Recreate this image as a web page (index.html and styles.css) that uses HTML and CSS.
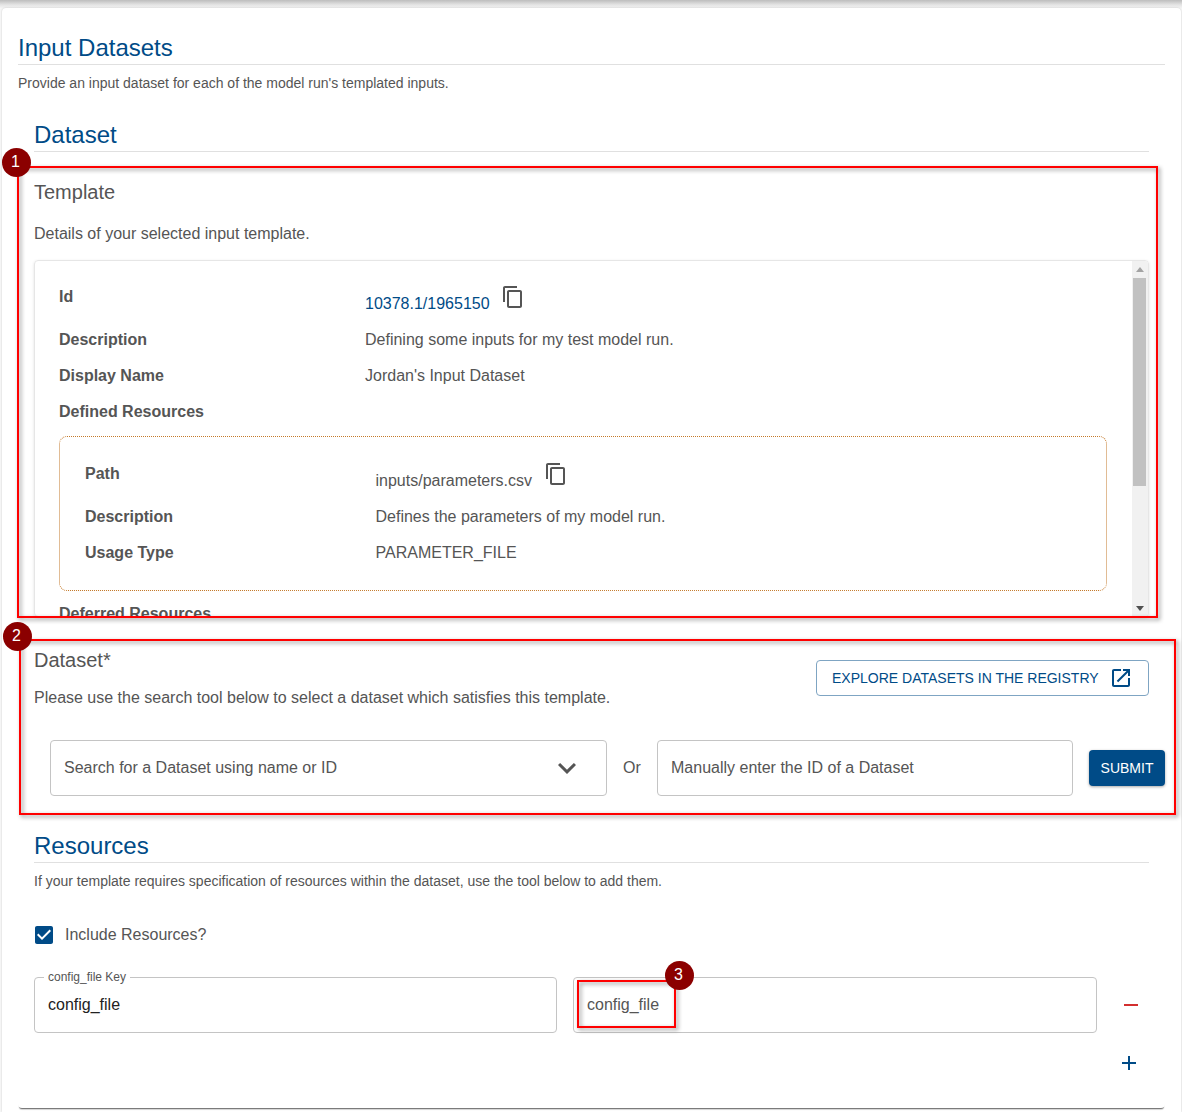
FILE: index.html
```html
<!DOCTYPE html>
<html lang="en">
<head>
<meta charset="utf-8">
<title>Input Datasets</title>
<link rel="stylesheet" href="styles.css">
</head>
<body>
<div class="page">
  <div class="topbar"></div>
  <main class="sheet">
    <div class="card">
      <header class="intro">
        <h1 class="title">Input Datasets</h1>
        <p class="small intro-text">Provide an input dataset for each of the model run's templated inputs.</p>
      </header>
      <section class="inner">
        <h2 class="title dataset-title">Dataset</h2>
        <h3 class="subtitle template-title">Template</h3>
        <p class="body-text details-text">Details of your selected input template.</p>
        <div class="details-box">
          <div class="details-scroll">
            <div class="row row-tall">
              <div class="label">Id</div>
              <div class="value value-tall">
                <a class="link">10378.1/1965150</a>
                <svg class="copy" viewBox="0 0 24 24"><path d="M16 1H4c-1.1 0-2 .9-2 2v14h2V3h12V1zm3 4H8c-1.1 0-2 .9-2 2v14c0 1.1.9 2 2 2h11c1.1 0 2-.9 2-2V7c0-1.1-.9-2-2-2zm0 16H8V7h11v14z"/></svg>
              </div>
            </div>
            <div class="row"><div class="label">Description</div><div class="value">Defining some inputs for my test model run.</div></div>
            <div class="row"><div class="label">Display Name</div><div class="value">Jordan's Input Dataset</div></div>
            <div class="row"><div class="label">Defined Resources</div></div>
            <div class="resource-box">
              <div class="row row-tall nested">
                <div class="label">Path</div>
                <div class="value value-tall">
                  <span>inputs/parameters.csv</span>
                  <svg class="copy" viewBox="0 0 24 24"><path d="M16 1H4c-1.1 0-2 .9-2 2v14h2V3h12V1zm3 4H8c-1.1 0-2 .9-2 2v14c0 1.1.9 2 2 2h11c1.1 0 2-.9 2-2V7c0-1.1-.9-2-2-2zm0 16H8V7h11v14z"/></svg>
                </div>
              </div>
              <div class="row nested"><div class="label">Description</div><div class="value">Defines the parameters of my model run.</div></div>
              <div class="row nested"><div class="label">Usage Type</div><div class="value">PARAMETER_FILE</div></div>
            </div>
            <div class="row deferred"><div class="label">Deferred Resources</div></div>
          </div>
          <div class="scrollbar">
            <div class="arrow arrow-up"></div>
            <div class="thumb"></div>
            <div class="arrow arrow-down"></div>
          </div>
        </div>

        <div class="dataset-head">
          <div>
            <h3 class="subtitle">Dataset*</h3>
            <p class="body-text search-text">Please use the search tool below to select a dataset which satisfies this template.</p>
          </div>
          <a class="outline-btn">
            <span>EXPLORE DATASETS IN THE REGISTRY</span>
            <svg class="btn-icon" viewBox="0 0 24 24"><path d="M19 19H5V5h7V3H5c-1.11 0-2 .9-2 2v14c0 1.1.89 2 2 2h14c1.1 0 2-.9 2-2v-7h-2v7zM14 3v2h3.59l-9.83 9.83 1.41 1.41L19 6.41V10h2V3h-7z"/></svg>
          </a>
        </div>
        <div class="search-row">
          <div class="field select-field">
            <span>Search for a Dataset using name or ID</span>
            <svg class="chevron" viewBox="0 0 24 24"><path d="M16.59 8.59L12 13.17 7.41 8.59 6 10l6 6 6-6z"/></svg>
          </div>
          <div class="or">Or</div>
          <div class="field manual-field">Manually enter the ID of a Dataset</div>
          <button class="submit" type="button">SUBMIT</button>
        </div>

        <h2 class="title resources-title">Resources</h2>
        <p class="small resources-text">If your template requires specification of resources within the dataset, use the tool below to add them.</p>
        <label class="check-row">
          <svg class="check" viewBox="0 0 24 24"><path d="M19 3H5c-1.11 0-2 .9-2 2v14c0 1.1.89 2 2 2h14c1.1 0 2-.9 2-2V5c0-1.1-.9-2-2-2zm-9 14l-5-5 1.41-1.41L10 14.17l7.59-7.59L19 8l-9 9z"/></svg>
          <span>Include Resources?</span>
        </label>
        <div class="kv-row">
          <div class="field kv-field key-field">
            <span class="legend">config_file Key</span>
            <span>config_file</span>
          </div>
          <div class="field kv-field value-field">config_file</div>
          <svg class="minus" viewBox="0 0 24 24"><path d="M19 13H5v-2h14v2z"/></svg>
        </div>
        <div class="add-row">
          <svg class="plus" viewBox="0 0 24 24"><path d="M19 13h-6v6h-2v-6H5v-2h6V5h2v6h6v2z"/></svg>
        </div>
      </section>
    </div>
  </main>

  <div class="mark mark-one"></div>
  <div class="mark mark-two"></div>
  <div class="mark mark-three"></div>
  <div class="badge badge-one">1</div>
  <div class="badge badge-two">2</div>
  <div class="badge badge-three">3</div>
</div>
</body>
</html>
```

FILE: styles.css
```css
* { box-sizing: border-box; }
html, body { margin: 0; padding: 0; }
body {
  background: #f7f7f7;
  font-family: "Liberation Sans", Arial, sans-serif;
  color: #555;
}
.page { position: relative; width: 1182px; height: 1112px; overflow: hidden; }
.topbar {
  height: 8px;
  background: linear-gradient(#bdbdbd, #e4e4e4 60%, #f4f4f4);
}
.sheet {
  width: 1179px;
  height: 1104px;
  margin-left: 2px;
  padding-left: 16px;
  padding-right: 16px;
  background: #fff;
  border-radius: 4px 4px 0 0;
  box-shadow: 0 0 2px rgba(0, 0, 0, .2);
}
.card {
  width: 1147px;
  padding-top: 26px;
  padding-bottom: 33px;
  background: #fff;
  border-radius: 0 0 4px 4px;
  box-shadow: 0 2px 1px -1px rgba(0, 0, 0, .5), 0 3px 1px -1px rgba(0, 0, 0, .12);
}
.title {
  margin: 0;
  padding-bottom: 2px;
  border-bottom: 1px solid #e0e0e0;
  font-size: 24px;
  line-height: 28px;
  font-weight: 400;
  color: #004b87;
}
.small { margin: 0; font-size: 14px; line-height: 20px; }
.body-text { margin: 0; font-size: 16px; line-height: 20px; }
.subtitle { margin: 0; font-size: 20px; line-height: 24px; font-weight: 400; color: #555; }
.intro-text { margin-top: 8px; }
.inner { padding: 0 16px; }
.dataset-title { margin-top: 28px; }
.template-title { margin-top: 28px; }
.details-text { margin-top: 20px; }

.details-box {
  display: flex;
  height: 357px;
  margin-top: 16px;
  border: 1px solid #e6e6e6;
  border-radius: 4px;
  box-shadow: 0 1px 3px rgba(0, 0, 0, .12);
  overflow: hidden;
}
.details-scroll { flex: 1; min-width: 0; padding: 17px 25px 0 24px; overflow: hidden; }
.row {
  display: grid;
  grid-template-columns: 306px 1fr;
  padding: 9px 0 7px;
  font-size: 16px;
  line-height: 20px;
}
.row-tall { height: 43px; }
.label { font-weight: 700; }
.value-tall { display: flex; align-items: flex-start; }
.value-tall a, .value-tall span { margin-top: 7px; }
.link { color: #004b87; }
.copy { flex: none; width: 24px; height: 24px; margin: -2px 0 0 11px; fill: #555; }
.resource-box {
  height: 155px;
  margin-top: 7px;
  padding: 18px 25px 0;
  border: 1px dotted #c47a2c;
  border-radius: 8px;
}
.nested { grid-template-columns: 290.5px 1fr; }
.nested .copy { margin-left: 12px; }
.deferred { margin-top: 4px; }

.scrollbar {
  flex: none;
  display: flex;
  flex-direction: column;
  width: 16px;
  background: #f1f1f1;
}
.arrow { position: relative; height: 17px; }
.arrow::after {
  content: "";
  position: absolute;
  left: 4px;
  width: 0;
  height: 0;
  border-left: 4px solid transparent;
  border-right: 4px solid transparent;
}
.arrow-up::after { top: 6px; border-bottom: 5px solid #a3a3a3; }
.arrow-down { margin-top: auto; }
.arrow-down::after { bottom: 5px; border-top: 5px solid #505050; }
.thumb { height: 208px; margin: 0 2px 0 1px; background: #c1c1c1; }

.dataset-head { display: flex; justify-content: space-between; align-items: flex-start; margin-top: 31px; }
.search-text { margin-top: 16px; }
.outline-btn {
  display: flex;
  align-items: center;
  width: 333px;
  height: 36px;
  margin-top: 12px;
  padding-left: 15px;
  border: 1px solid #7fa5c3;
  border-radius: 4px;
  font-size: 14px;
  color: #004b87;
}
.btn-icon { width: 24px; height: 24px; margin-left: 10px; fill: #004b87; }
.search-row { display: flex; align-items: center; margin: 32px -16px 0 16px; }
.field {
  display: flex;
  align-items: center;
  height: 56px;
  padding: 0 13px;
  border: 1px solid #c4c4c4;
  border-radius: 4px;
  font-size: 16px;
  color: #555;
}
.select-field { width: 557px; justify-content: space-between; padding-right: 21px; }
.chevron { width: 36px; height: 36px; fill: #555; }
.or { width: 50px; text-align: center; font-size: 16px; }
.manual-field { width: 416px; }
.submit {
  width: 76px;
  height: 36px;
  margin-left: 16px;
  padding: 0;
  border: 0;
  border-radius: 4px;
  background: #004b87;
  color: #fff;
  font: 14px "Liberation Sans", Arial, sans-serif;
  box-shadow: 0 1px 3px rgba(0, 0, 0, .35);
}
.resources-title { margin-top: 36px; }
.resources-text { margin-top: 8px; }
.check-row { display: flex; align-items: center; height: 24px; margin: 32px 0 0 -2px; font-size: 16px; }
.check { width: 24px; height: 24px; margin-right: 9px; fill: #004b87; }
.kv-row { display: flex; align-items: center; margin-top: 30px; }
.kv-field { position: relative; }
.key-field { width: 523px; color: #222; }
.value-field { width: 524px; margin-left: 16px; }
.legend {
  position: absolute;
  top: -7px;
  left: 9px;
  padding: 0 4px;
  background: #fff;
  font-size: 12px;
  line-height: 13px;
  color: #555;
}
.minus { width: 24px; height: 24px; margin-left: 22px; fill: #d32f2f; }
.add-row { display: flex; justify-content: flex-end; height: 24px; margin-top: 18px; padding-right: 8px; }
.plus { width: 24px; height: 24px; fill: #004b87; }

.mark {
  position: absolute;
  border: 2px solid #f00;
  filter: drop-shadow(2px 2px 2px rgba(0, 0, 0, .45));
}
.mark-one { left: 17px; top: 166px; width: 1141px; height: 452px; }
.mark-two { left: 19px; top: 639px; width: 1157px; height: 176px; }
.mark-three { left: 577px; top: 980px; width: 99px; height: 48px; }
.badge {
  position: absolute;
  width: 29px;
  height: 29px;
  padding-right: 2px;
  border-radius: 50%;
  background: #8b0000;
  color: #fff;
  font-size: 16px;
  line-height: 27px;
  text-align: center;
}
.badge-one { left: 2px; top: 148px; }
.badge-two { left: 3px; top: 622px; }
.badge-three { left: 665px; top: 961px; }
```
